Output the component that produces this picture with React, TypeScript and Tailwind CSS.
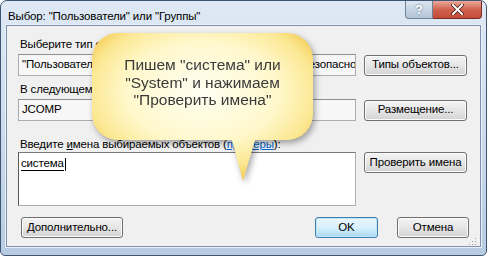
import React from 'react';

const ui = { fontFamily: '"Liberation Sans", Arial, sans-serif' };

function Btn({ label, className = '' }: { label: string; className?: string }) {
  return (
    <div
      className={`flex items-center justify-center rounded-[3px] border border-[#707070] bg-gradient-to-b from-[#f4f4f4] via-[#e6e6e6] to-[#d3d3d3] text-[11.5px] leading-none tracking-[-0.15px] text-black shadow-[inset_0_0_0_1px_#fbfbfb] ${className}`}
    >
      {label}
    </div>
  );
}

function Field({ text }: { text: string }) {
  return (
    <div className="flex h-[22px] w-[338px] items-center overflow-hidden whitespace-nowrap border border-[#abadb3] border-t-[#8e8f8f] bg-[#f7f7f7] pl-[3px] text-[11.5px] tracking-[-0.15px] text-black">
      {text}
    </div>
  );
}

export default function App() {
  return (
    <div className="relative h-[257px] w-[487px] bg-white" style={ui}>
      {/* window frame */}
      <div className="flex h-[256px] w-[487px] flex-col rounded-t-[7px] rounded-b-[5px] border border-[#3e5573] bg-gradient-to-b from-[#dfe9f5] via-[#cddcec] to-[#b7cbe2]">
        {/* title bar */}
        <div className="flex h-[28px] items-start justify-between">
          <div className="pl-[7px] pt-[8px] text-[11.5px] leading-[14px] tracking-[-0.15px] text-black">
            Выбор: "Пользователи" или "Группы"
          </div>
          <div className="mr-[4px] flex">
            <div className="flex h-[18px] w-[28px] items-center justify-center rounded-bl-[4px] border border-t-0 border-[#6f839c] bg-gradient-to-b from-[#dce6f1] to-[#b3c4d8] text-[13px] font-bold leading-none text-white [text-shadow:0_0_2px_#4a5d75]">
              ?
            </div>
            <div className="flex h-[18px] w-[49px] items-center justify-center rounded-br-[4px] border border-l-0 border-t-0 border-[#7b2a22] bg-gradient-to-b from-[#e9a99b] via-[#d0614f] to-[#c44c38]">
              <svg width="13" height="11" viewBox="0 0 13 11">
                <path d="M2 1 L11 10 M11 1 L2 10" stroke="#3a1510" strokeWidth="3.4" strokeLinecap="square" />
                <path d="M2 1 L11 10 M11 1 L2 10" stroke="#ffffff" strokeWidth="2" strokeLinecap="square" />
              </svg>
            </div>
          </div>
        </div>

        {/* client area */}
        <div className="mx-[5px] mb-[8px] flex flex-1 flex-col border border-[#7d93ad] bg-[#f0f0f0] px-[11px] pt-[11px] text-[11.5px] tracking-[-0.15px] shadow-[0_0_0_1px_#eaf1f8]">
          <div className="pl-[2px] leading-[14px] text-black">Выберите тип объекта:</div>
          <div className="mt-[3px] flex items-center gap-[8px]">
            <Field text={'"Пользователи", "Группы" или "Встроенные субъекты безопасности"'} />
            <Btn label="Типы объектов..." className="h-[21px] w-[103px]" />
          </div>

          <div className="mt-[6px] pl-[2px] leading-[14px] text-black">В следующем месте:</div>
          <div className="mt-[3px] flex items-center gap-[8px]">
            <Field text="JCOMP" />
            <Btn label="Размещение..." className="h-[21px] w-[103px]" />
          </div>

          <div className="mt-[16px] pl-[2px] leading-[14px] text-black">
            Введите <span className="underline">и</span>мена выбираемых объектов (<span className="text-[#0066cc] underline">примеры</span>):
          </div>
          <div className="mt-[1px] flex items-start gap-[8px]">
            <div className="h-[54px] w-[338px] border border-[#abadb3] border-l-[#5a5a5a] border-t-[#7a7a7a] bg-white pl-[2px] pt-[4px]">
              <div className="flex items-end">
                <span className="border-b border-black leading-[13px] text-black">система</span>
                <div className="ml-[1px] h-[13px] w-px bg-black" />
              </div>
            </div>
            <Btn label="Проверить имена" className="h-[21px] w-[103px]" />
          </div>

          <div className="mt-[11px] flex items-center">
            <Btn label="Дополнительно..." className="ml-[3px] h-[21px] w-[102px]" />
            <div className="flex-1" />
            <div className="flex h-[21px] w-[63px] items-center justify-center rounded-[3px] border border-[#3c7fb1] bg-gradient-to-b from-[#eaf6fd] via-[#d9f0fc] to-[#a7d9f5] leading-none text-black shadow-[inset_0_0_0_1px_#c4e5f6]">
              OK
            </div>
            <Btn label="Отмена" className="ml-[19px] h-[21px] w-[72px]" />
          </div>
          <div className="flex justify-end">
            <svg width="8" height="8" viewBox="0 0 8 8" className="mr-[-8px]">
              <rect x="6" y="0" width="1" height="1" fill="#a0a0a0" />
              <rect x="3" y="3" width="1" height="1" fill="#a0a0a0" />
              <rect x="6" y="3" width="1" height="1" fill="#a0a0a0" />
              <rect x="0" y="6" width="1" height="1" fill="#a0a0a0" />
              <rect x="3" y="6" width="1" height="1" fill="#a0a0a0" />
              <rect x="6" y="6" width="1" height="1" fill="#a0a0a0" />
            </svg>
          </div>
        </div>
      </div>

      {/* callout bubble */}
      <div className="absolute left-[92px] top-[33px] h-[150px] w-[224px] [filter:drop-shadow(2px_3px_3px_rgba(0,0,0,0.35))]">
        <svg width="224" height="150" viewBox="0 0 224 150" className="absolute left-0 top-0">
          <defs>
            <radialGradient id="bub" cx="0.5" cy="0.4" r="0.62">
              <stop offset="0" stopColor="#fffef2" />
              <stop offset="0.55" stopColor="#fff8cc" />
              <stop offset="0.82" stopColor="#fce894" />
              <stop offset="1" stopColor="#f2c94e" />
            </radialGradient>
          </defs>
          <path
            d="M26,0 H195 A26,26 0 0 1 221,26 V81 A26,26 0 0 1 195,107 H163 L151,148 L140,107 H26 A26,26 0 0 1 0,81 V26 A26,26 0 0 1 26,0 Z"
            fill="url(#bub)"
          />
        </svg>
        <div className="absolute left-0 top-[23px] w-[221px] text-center text-[15.5px] leading-[17.5px] text-[#3a3a3a]">
          Пишем "система" или
          <br />
          "System" и нажимаем
          <br />
          "Проверить имена"
        </div>
      </div>
    </div>
  );
}
